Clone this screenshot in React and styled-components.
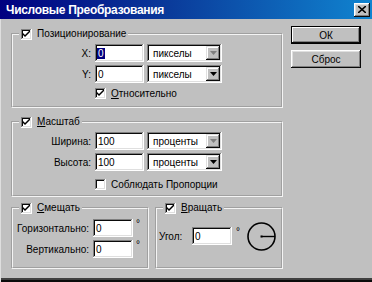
import styled, { createGlobalStyle } from "styled-components";

const Global = createGlobalStyle`
  html, body {
    margin: 0;
    padding: 0;
    background: #c0c0c0;
  }
  * {
    box-sizing: border-box;
  }
`;

const Window = styled.div`
  width: 372px;
  height: 282px;
  background: #c0c0c0;
  font-family: "Liberation Sans", Arial, sans-serif;
  font-size: 10px;
  color: #000;
  box-shadow: inset 1px 0 #dfdfdf, inset 0 -2px #0a0a0a, inset 0 -4px #404040;
  overflow: hidden;
`;

const TitleBar = styled.div`
  height: 19px;
  display: flex;
  align-items: center;
  justify-content: space-between;
  padding: 0 2px 0 6px;
  background: linear-gradient(90deg, #000080 0%, #0a3a9a 45%, #1084d0 100%);
  color: #fff;
  font-weight: bold;
  font-size: 12px;
  letter-spacing: -0.3px;
`;

const CloseBtn = styled.div`
  width: 16px;
  height: 14px;
  background: #c0c0c0;
  box-shadow: inset -1px -1px #0a0a0a, inset 1px 1px #fff, inset -2px -2px #808080,
    inset 2px 2px #dfdfdf;
  display: flex;
  align-items: center;
  justify-content: center;
`;

const Body = styled.div`
  display: flex;
  padding: 7px 0 0 11px;
`;

const LeftCol = styled.div`
  width: 272px;
  padding-top: 2px;
  display: flex;
  flex-direction: column;
`;

const RightCol = styled.div`
  margin-left: 8px;
  display: flex;
  flex-direction: column;
  gap: 6px;
`;

const Group = styled.fieldset`
  margin: ${(p) => p.$mt || 0}px 0 0 0;
  padding: 0;
  border: 2px groove #f4f4f4;
  min-width: 0;
  width: ${(p) => (p.$w ? `${p.$w}px` : "auto")};
`;

const Legend = styled.legend`
  margin-left: 6px;
  padding: 0 2px;
  height: 12px;
  display: flex;
  align-items: center;
  gap: 5px;
  line-height: 12px;
  white-space: nowrap;
`;

const Box = styled.span`
  width: 11px;
  height: 11px;
  flex: none;
  background: #fff;
  box-shadow: inset -1px -1px #fff, inset 1px 1px #808080, inset -2px -2px #dfdfdf,
    inset 2px 2px #0a0a0a;
  display: flex;
  align-items: center;
  justify-content: center;
`;

const U = styled.span`
  text-decoration: underline;
`;

const Grid = styled.div`
  display: grid;
  grid-template-columns: ${(p) => p.$cols};
  column-gap: ${(p) => p.$cg || 3}px;
  row-gap: 3px;
  padding: ${(p) => p.$pad};
  align-items: center;
`;

const Label = styled.div`
  text-align: right;
  white-space: nowrap;
  padding-right: 1px;
`;

const Field = styled.div`
  height: 18px;
  background: #fff;
  box-shadow: inset -1px -1px #fff, inset 1px 1px #808080, inset -2px -2px #dfdfdf,
    inset 2px 2px #0a0a0a;
  padding: 0 3px;
  display: flex;
  align-items: center;
  width: ${(p) => (p.$w ? `${p.$w}px` : "auto")};
`;

const Sel = styled.mark`
  background: #000080;
  color: #fff;
  padding: 0 1px;
  margin-left: -1px;
`;

const Select = styled(Field)`
  padding: 2px 2px 2px 6px;
  justify-content: space-between;
`;

const ArrowBtn = styled.div`
  width: 14px;
  height: 14px;
  background: #c0c0c0;
  box-shadow: inset -1px -1px #0a0a0a, inset 1px 1px #dfdfdf, inset -2px -2px #808080,
    inset 2px 2px #fff;
  display: flex;
  align-items: center;
  justify-content: center;
`;

const CheckRow = styled.div`
  grid-column: 2 / span 2;
  display: flex;
  align-items: center;
  gap: 5px;
  height: 12px;
  white-space: nowrap;
  margin-top: ${(p) => p.$mt || 0}px;
`;

const Deg = styled.span`
  align-self: start;
  line-height: 10px;
  font-size: 10px;
`;

const Bottom = styled.div`
  display: flex;
  gap: 6px;
  margin-top: 5px;
`;

const RotateBody = styled.div`
  display: flex;
  align-items: center;
  height: 44px;
  padding-left: 2px;
`;

const RotLabel = styled.span`
  width: 33px;
`;

const DegInline = styled.span`
  align-self: flex-start;
  margin: 12px 0 0 4px;
  font-size: 10px;
`;

const Dial = styled.svg`
  margin-left: 6px;
`;

const Button = styled.div`
  width: 70px;
  height: 18px;
  display: flex;
  align-items: center;
  justify-content: center;
  background: #c0c0c0;
  box-shadow: ${(p) =>
    p.$default
      ? "inset 0 0 0 1px #000, inset -2px -2px #0a0a0a, inset 2px 2px #fff, inset -3px -3px #808080"
      : "inset -1px -1px #0a0a0a, inset 1px 1px #fff, inset -2px -2px #808080, inset 2px 2px #dfdfdf"};
`;

const Check = () => (
  <svg width="7" height="7" viewBox="0 0 7 7">
    <path d="M0 2 L0 4 L2 6 L7 1 L7 -1 L2 4 Z" fill="#000" />
  </svg>
);

const Checkbox = ({ on }) => <Box>{on && <Check />}</Box>;

const Arrow = ({ gray }) => (
  <ArrowBtn>
    <svg width="7" height="4" viewBox="0 0 7 4">
      <path d="M0 0 H7 L3.5 4 Z" fill={gray ? "#808080" : "#000"} />
    </svg>
  </ArrowBtn>
);

const Dropdown = ({ text, gray }) => (
  <Select>
    <span>{text}</span>
    <Arrow gray={gray} />
  </Select>
);

export default function App() {
  return (
    <>
      <Global />
      <Window>
        <TitleBar>
          <span>Числовые Преобразования</span>
          <CloseBtn>
            <svg width="8" height="7" viewBox="0 0 8 7">
              <path d="M0 0 L8 7 M8 0 L0 7" stroke="#000" strokeWidth="1.6" />
            </svg>
          </CloseBtn>
        </TitleBar>

        <Body>
          <LeftCol>
            {/* позиционирование */}
            <Group>
              <Legend>
                <Checkbox on />
                Позиционирование
              </Legend>
              <Grid $cols="79px 49px 75px" $pad="4px 0 7px 0">
                <Label>X:</Label>
                <Field>
                  <Sel>0</Sel>
                </Field>
                <Dropdown text="пикселы" gray />
                <Label>Y:</Label>
                <Field>0</Field>
                <Dropdown text="пикселы" />
                <CheckRow $mt={1}>
                  <Checkbox on />
                  <span>
                    <U>О</U>тносительно
                  </span>
                </CheckRow>
              </Grid>
            </Group>

            {/* масштаб */}
            <Group $mt={8}>
              <Legend>
                <Checkbox on />
                <span>
                  <U>М</U>асштаб
                </span>
              </Legend>
              <Grid $cols="79px 49px 75px" $pad="4px 0 5px 0">
                <Label>Ширина:</Label>
                <Field>100</Field>
                <Dropdown text="проценты" gray />
                <Label>Высота:</Label>
                <Field>100</Field>
                <Dropdown text="проценты" />
                <CheckRow $mt={4}>
                  <Checkbox />
                  <span>Соблюдать Пропорции</span>
                </CheckRow>
              </Grid>
            </Group>

            <Bottom>
              {/* смещать */}
              <Group $w={138}>
                <Legend>
                  <Checkbox on />
                  <span>
                    <U>С</U>мещать
                  </span>
                </Legend>
                <Grid $cols="77px 40px 8px" $cg={3} $pad="5px 0 9px 0">
                  <Label>Горизонтально:</Label>
                  <Field>0</Field>
                  <Deg>°</Deg>
                  <Label>Вертикально:</Label>
                  <Field>0</Field>
                  <Deg>°</Deg>
                </Grid>
              </Group>

              {/* вращать */}
              <Group $w={128}>
                <Legend>
                  <Checkbox on />
                  <span>
                    <U>В</U>ращать
                  </span>
                </Legend>
                <RotateBody>
                  <RotLabel>Угол:</RotLabel>
                  <Field $w={40}>0</Field>
                  <DegInline>°</DegInline>
                  <Dial width="31" height="31" viewBox="0 0 31 31">
                    <circle cx="15.5" cy="15.5" r="13.5" fill="none" stroke="#000" strokeWidth="1.6" />
                    <path d="M15.5 15.5 H29" stroke="#000" strokeWidth="1.4" />
                    <rect x="14.5" y="14.5" width="2" height="2" fill="#000" />
                  </Dial>
                </RotateBody>
              </Group>
            </Bottom>
          </LeftCol>

          <RightCol>
            <Button $default>ОК</Button>
            <Button>Сброс</Button>
          </RightCol>
        </Body>
      </Window>
    </>
  );
}
